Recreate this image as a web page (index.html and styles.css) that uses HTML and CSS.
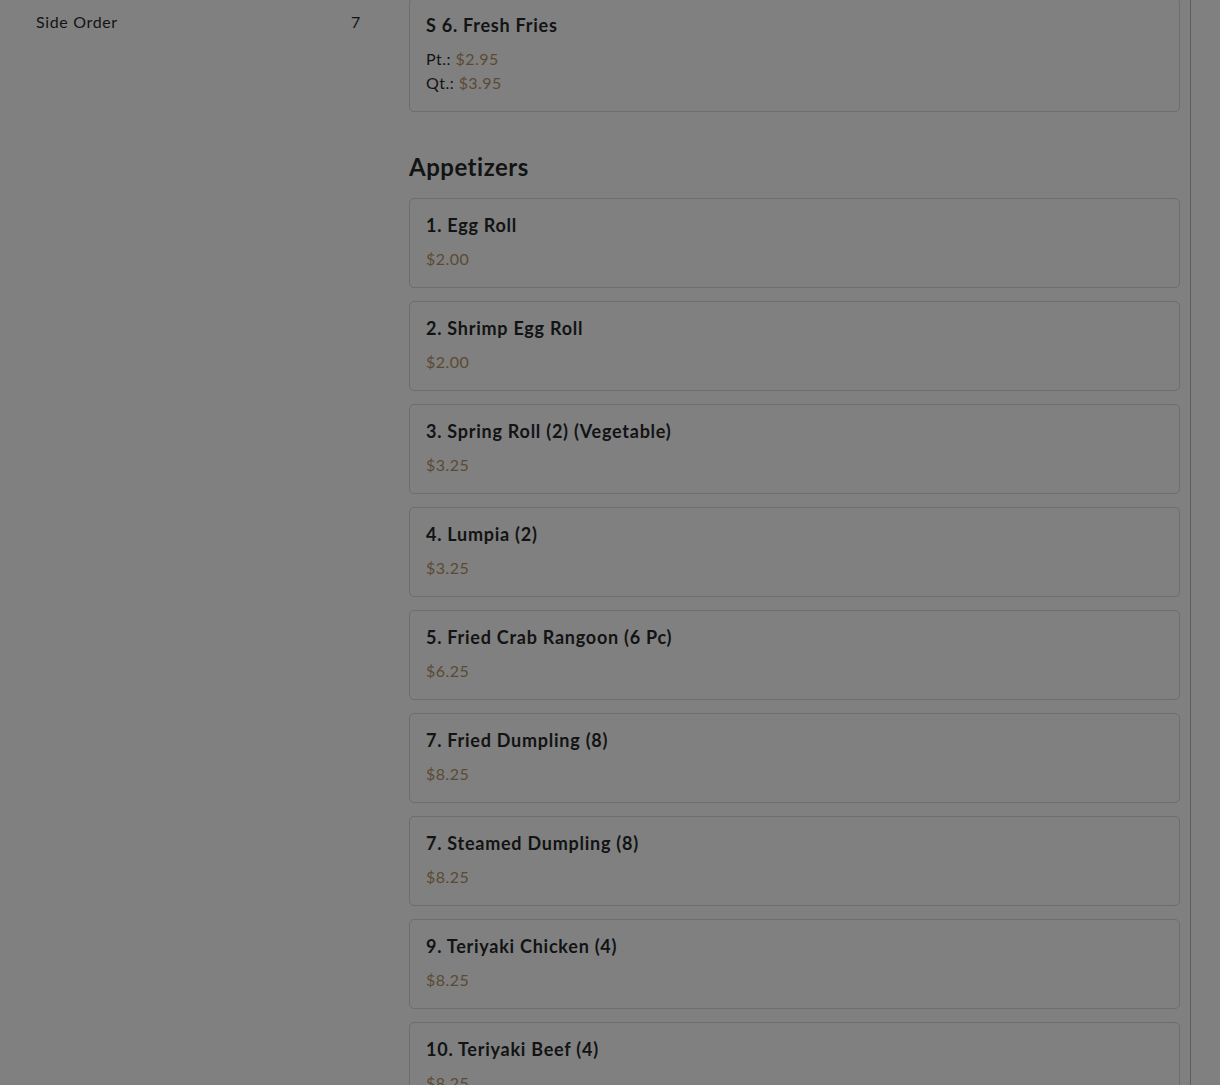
FILE: index.html
```html
<!DOCTYPE html>
<html lang="en">
<head>
<meta charset="utf-8">
<title>Menu</title>
<link rel="stylesheet" href="styles.css">
</head>
<body>
<div class="layout">
  <aside class="sidebar">
    <div class="cat-item"><span>Side Order</span><span>7</span></div>
  </aside>
  <main class="menu">
    <div class="card card-first">
      <div class="item-name">S 6. Fresh Fries</div>
      <div class="price-line">Pt.: <span class="price">$2.95</span></div>
      <div class="price-line">Qt.: <span class="price">$3.95</span></div>
    </div>

    <h2 class="section-title">Appetizers</h2>

    <div class="card"><div class="item-name">1. Egg Roll</div><div class="price-line"><span class="price">$2.00</span></div></div>
    <div class="card"><div class="item-name">2. Shrimp Egg Roll</div><div class="price-line"><span class="price">$2.00</span></div></div>
    <div class="card"><div class="item-name">3. Spring Roll (2) (Vegetable)</div><div class="price-line"><span class="price">$3.25</span></div></div>
    <div class="card"><div class="item-name">4. Lumpia (2)</div><div class="price-line"><span class="price">$3.25</span></div></div>
    <div class="card"><div class="item-name">5. Fried Crab Rangoon (6 Pc)</div><div class="price-line"><span class="price">$6.25</span></div></div>
    <div class="card"><div class="item-name">7. Fried Dumpling (8)</div><div class="price-line"><span class="price">$8.25</span></div></div>
    <div class="card"><div class="item-name">7. Steamed Dumpling (8)</div><div class="price-line"><span class="price">$8.25</span></div></div>
    <div class="card"><div class="item-name">9. Teriyaki Chicken (4)</div><div class="price-line"><span class="price">$8.25</span></div></div>
    <div class="card"><div class="item-name">10. Teriyaki Beef (4)</div><div class="price-line"><span class="price">$8.25</span></div></div>
  </main>
  <div class="rail"></div>
</div>
</body>
</html>
```

FILE: styles.css
```css
html, body {
  margin: 0;
  padding: 0;
  background: #808080;
  height: 1085px;
  overflow: hidden;
}
body {
  font-family: "Lato", "Open Sans", sans-serif;
  color: #121314;
}
.layout {
  display: flex;
  align-items: flex-start;
  padding-left: 24px;
}
.sidebar {
  width: 349px;
  flex: none;
}
.cat-item {
  display: flex;
  justify-content: space-between;
  padding: 10px 12px;
  font-size: 16px;
  line-height: 24px;
  letter-spacing: 0.65px;
}
.menu {
  width: 771px;
  margin-left: 36px;
  flex: none;
  display: flex;
  flex-direction: column;
  gap: 13px;
  margin-top: -2px;
}
.rail {
  width: 10px;
  height: 1085px;
  border-right: 1px solid #5c5c5c;
  flex: none;
}
.card {
  border: 1px solid #6c6d6e;
  border-radius: 5px;
  padding: 16px;
}
.item-name {
  font-weight: 700;
  font-size: 18px;
  line-height: 20px;
  margin-bottom: 12px;
  letter-spacing: 0.75px;
}
.price-line {
  font-size: 16px;
  line-height: 24px;
  letter-spacing: 0.45px;
}
.price {
  color: #5b4a33;
}
.section-title {
  font-size: 24px;
  font-weight: 700;
  line-height: 29px;
  margin: 27px 0 4px;
  letter-spacing: 0.5px;
}
```
